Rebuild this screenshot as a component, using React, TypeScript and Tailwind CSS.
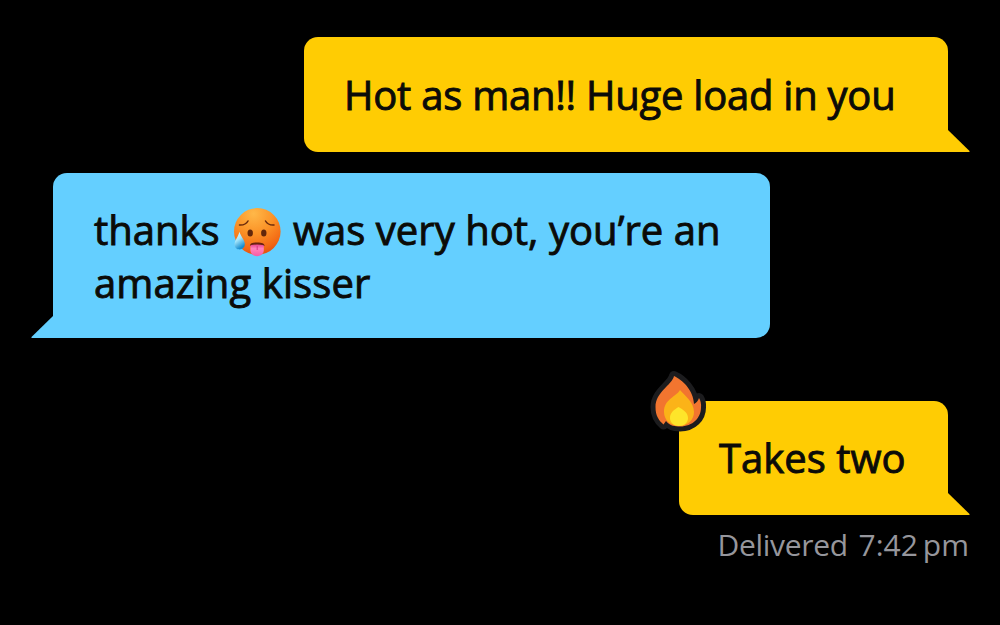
import React from "react";

interface BubbleProps {
  side: "left" | "right";
  className: string;
  children: React.ReactNode;
}

const Bubble: React.FC<BubbleProps> = ({ side, className, children }) => {
  const isRight = side === "right";

  return (
    <div
      className={`relative box-border text-[40px] leading-[53px] whitespace-nowrap text-[#0b0b08] [-webkit-text-stroke:0.9px_#0b0b08] ${
        isRight
          ? "rounded-[14px] rounded-br-none bg-[#ffcc03]"
          : "rounded-[14px] rounded-bl-none bg-[#64cfff]"
      } ${className}`}
    >
      {children}
      <svg
        className={`absolute bottom-0 h-[22px] w-[23px] ${
          isRight ? "-right-[22px]" : "-left-[22px] -scale-x-100"
        }`}
        viewBox="0 0 23 22"
      >
        <path
          d="M0 0H1L22.5 21V22H0Z"
          className={isRight ? "fill-[#ffcc03]" : "fill-[#64cfff]"}
        />
      </svg>
    </div>
  );
};

const HotFace: React.FC = () => (
  <svg className="mt-[4px] h-[50px] w-[50px] shrink-0" viewBox="0 0 50 50">
    <defs>
      <radialGradient id="face" cx="0.42" cy="0.12" r="0.95">
        <stop offset="0" stopColor="#ffb849" />
        <stop offset="0.45" stopColor="#fb9226" />
        <stop offset="0.8" stopColor="#f36814" />
        <stop offset="1" stopColor="#dc4710" />
      </radialGradient>
      <linearGradient id="drop" x1="0" y1="0" x2="0.4" y2="1">
        <stop offset="0" stopColor="#e2faff" />
        <stop offset="0.5" stopColor="#a5e6fb" />
        <stop offset="1" stopColor="#168ccf" />
      </linearGradient>
      <linearGradient id="tongue" x1="0" y1="0" x2="0" y2="1">
        <stop offset="0" stopColor="#e94691" />
        <stop offset="0.35" stopColor="#ff83bc" />
        <stop offset="1" stopColor="#f65ba5" />
      </linearGradient>
    </defs>
    <circle cx="25.3" cy="24.4" r="23.3" fill="url(#face)" />
    <g fill="none" stroke="#6b2b0c" strokeWidth="1.5" strokeLinecap="round">
      <path d="M7.5 18Q13.5 18.4 16 14" />
      <path d="M33.5 14Q36 18.4 42 18" />
    </g>
    <ellipse cx="18.2" cy="26" rx="2.7" ry="3.5" fill="#63270b" />
    <ellipse cx="31.8" cy="26" rx="2.7" ry="3.5" fill="#63270b" />
    <path
      d="M18 39C17.7 36.2 20 35.4 25.2 35.4S32.7 36.4 32.4 39Z"
      fill="#6a210f"
    />
    <path
      d="M18.4 38.2Q25 37 31.8 38.2V43C31.8 51.2 18.4 51.2 18.4 43Z"
      fill="url(#tongue)"
    />
    <path d="M25.2 39V43" stroke="#d93986" strokeWidth="1" />
    <path
      d="M7.5 24.8C6.2 29.8 2.6 33.5 2.6 37.2C2.6 40.7 4.8 42.4 7.6 42.4C10.8 42.4 13 40.2 12.8 36.6C12.4 32.7 8.8 29.3 7.5 24.8Z"
      fill="url(#drop)"
    />
  </svg>
);

const Flame: React.FC = () => (
  <svg
    className="absolute -top-[39px] -left-[39px] h-[80px] w-[80px]"
    viewBox="0 0 80 80"
  >
    <path
      d="M34 14C32 23 15.5 30 15.5 45C15.5 53.5 18.5 58.2 23.5 62.5L26 59C30 64 35 64.5 40 64.5C53 64.5 61 55.5 61 45.5Q61.5 40 59 36Q57.5 40.5 54 42C53.5 28 42 17.5 34 14Z"
      fill="#1c1c1e"
      stroke="#1c1c1e"
      strokeWidth="10"
      strokeLinejoin="round"
    />
    <path
      d="M34 14C32 23 15.5 30 15.5 45C15.5 53.5 18.5 58.2 23.5 62.5L26 59C30 64 35 64.5 40 64.5C53 64.5 61 55.5 61 45.5Q61.5 40 59 36Q57.5 40.5 54 42C53.5 28 42 17.5 34 14Z"
      fill="#f2752f"
    />
    <path
      d="M40 28C36 35 24 37 24 50C24 58.5 31 64 39.5 64C48 64 54 57.5 54 50C54 40 45 34 40 28Z"
      fill="#fbb318"
    />
    <path
      d="M38.5 45C34 48 30 50.5 30 56C30 60.5 34 64 39 64C44.3 64 48 60.5 48 56C48 50.5 43 47.5 38.5 45Z"
      fill="#fee52a"
    />
  </svg>
);

const App: React.FC = () => {
  return (
    <main className="flex h-[625px] w-[1000px] flex-col overflow-hidden bg-black pt-[37px] pr-[52px] pl-[53px] font-['Open_Sans','Noto_Sans',sans-serif]">
      <Bubble
        side="right"
        className="h-[115px] w-[644px] self-end pt-[31px] pl-[40px] tracking-[-0.25px]"
      >
        Hot as man!! Huge load in you
      </Bubble>
      <Bubble
        side="left"
        className="mt-[21px] h-[165px] w-[717px] self-start pt-[30px] pl-[41px]"
      >
        <div className="flex h-[53px] items-start">
          <span className="w-[138px]">thanks</span>
          <HotFace />
          <span className="ml-[11px] tracking-[0.03px]">
            was very hot, you’re an
          </span>
        </div>
        <div className="tracking-[0.1px]">amazing kisser</div>
      </Bubble>
      <Bubble
        side="right"
        className="mt-[63px] h-[114px] w-[269px] self-end pt-[30px] pl-[40px]"
      >
        Takes two
        <Flame />
      </Bubble>
      <div className="mt-[10px] -mr-[21px] flex self-end text-[30px] leading-[40px] whitespace-pre text-[#96969c]">
        <span className="w-[141px] tracking-[-0.3px]">Delivered </span>
        <span>7:42&#8201;pm</span>
      </div>
    </main>
  );
};

export default App;
